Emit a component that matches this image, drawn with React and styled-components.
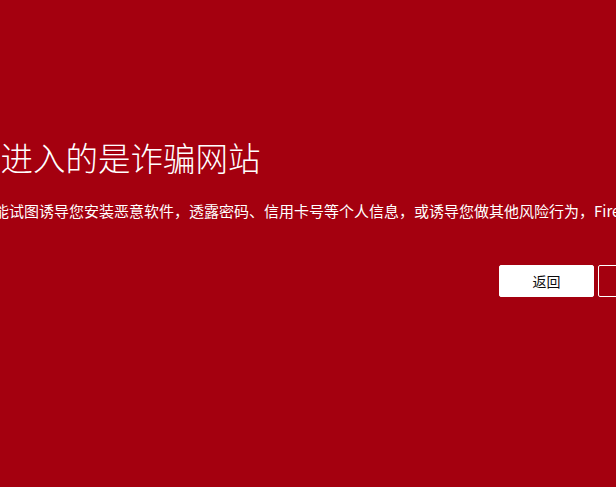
import React from 'react';
import styled, { createGlobalStyle } from 'styled-components';

const GlobalStyle = createGlobalStyle`
  html, body {
    margin: 0;
    padding: 0;
    height: 100%;
    overflow: hidden;
    background: #a4000f;
  }
  #root {
    height: 100%;
  }
`;

const Page = styled.div`
  height: 100%;
  background: #a4000f;
  color: #ffffff;
  font-family: "Noto Sans CJK SC", "Noto Sans", sans-serif;
  overflow: hidden;
`;

const Container = styled.div`
  width: 830px;
  margin-left: -97px;
  padding-top: 134px;
`;

const Title = styled.h1`
  margin: 0;
  font-size: 32.5px;
  font-weight: 300;
  line-height: 46px;
  white-space: nowrap;
`;

const Description = styled.p`
  margin: 20px 0 0 31px;
  font-size: 15px;
  line-height: 22px;
  white-space: nowrap;
`;

const ButtonRow = styled.div`
  display: flex;
  gap: 4px;
  margin-top: 43px;
  padding-left: 596px;
`;

const Button = styled.button`
  height: 32px;
  min-width: ${(p) => p.$width}px;
  padding: 0 12px;
  border-radius: 2px;
  font-family: "Noto Sans CJK SC", "Noto Sans", sans-serif;
  font-size: 14px;
  cursor: pointer;
  background: ${(p) => (p.$primary ? '#ffffff' : 'transparent')};
  color: ${(p) => (p.$primary ? '#0c0c0d' : '#ffffff')};
  border: 1px solid #ffffff;
  white-space: nowrap;
`;

export default function App() {
  return (
    <Page>
      <GlobalStyle />
      <Container>
        <Title>您即将进入的是诈骗网站</Title>
        <Description>
          此网站可能试图诱导您安装恶意软件，透露密码、信用卡号等个人信息，或诱导您做其他风险行为，Firefox 已阻止您访问。
        </Description>
        <ButtonRow>
          <Button $primary $width={95}>返回</Button>
          <Button $width={120}>详细信息</Button>
        </ButtonRow>
      </Container>
    </Page>
  );
}
